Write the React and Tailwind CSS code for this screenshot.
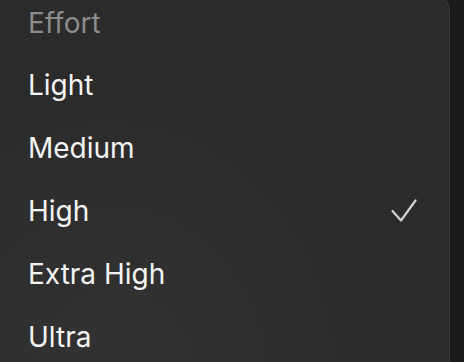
import React from 'react';

// menu items
const levels = [
  { label: 'Light' },
  { label: 'Medium' },
  { label: 'High', checked: true },
  { label: 'Extra High' },
  { label: 'Ultra' },
];

const Check = () => (
  <svg width="26" height="24" viewBox="0 0 26 24" fill="none" className="shrink-0">
    <path
      d="M1.5 12 L10 21.5 L24.5 1.5"
      stroke="#d2d2d2"
      strokeWidth="2.2"
      strokeLinecap="round"
      strokeLinejoin="round"
    />
  </svg>
);

export default function App() {
  return (
    <div className="w-[464px] h-[362px] overflow-hidden bg-[#1b1b1b] font-['Inter','Noto_Sans',sans-serif]">
      <div className="w-[450px] -mt-[10px] pt-[2px] pb-6 rounded-tr-[22px] border-t border-r border-[#3a3a3a] bg-[#2b2b2b] bg-[radial-gradient(ellipse_at_25%_100%,#333333,#2b2b2b_55%)]">
        {/* header */}
        <div className="h-[60px] flex items-center pl-[28px] text-[28px] text-[#8c8c8c]">
          Effort
        </div>
        {levels.map((item) => (
          <div
            key={item.label}
            className="h-[63px] flex items-center justify-between pl-[28px] pr-[32px] text-[28px] text-[#f4f4f4]"
          >
            <span>{item.label}</span>
            {item.checked && <Check />}
          </div>
        ))}
      </div>
    </div>
  );
}
